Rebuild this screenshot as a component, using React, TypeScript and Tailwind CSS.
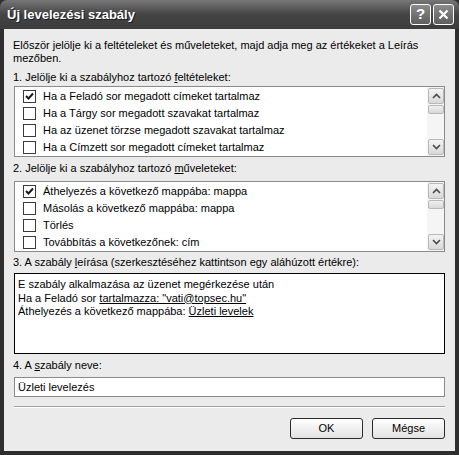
import React from "react";

const font = { fontFamily: '"Liberation Sans", Arial, sans-serif' };

function Check({ on }: { on?: boolean }) {
    return (
        <span className="w-[13px] h-[13px] border border-[#3a3a3a] bg-white flex items-center justify-center shrink-0">
            {on && (
                <svg width="9" height="9" viewBox="0 0 9 9">
                    <path d="M1 4 L3.5 6.5 L8 1.5" stroke="#1a1a1a" strokeWidth="2" fill="none" />
                </svg>
            )}
        </span>
    );
}

function ScrollBtn({ up }: { up?: boolean }) {
    return (
        <div className="h-[16px] w-[16px] rounded-[2px] border border-[#b8b8b8] bg-gradient-to-b from-[#f4f4f4] to-[#d8d8d8] flex items-center justify-center">
            <svg width="9" height="6" viewBox="0 0 9 6">
                <path
                    d={up ? "M1 5 L4.5 1.5 L8 5" : "M1 1 L4.5 4.5 L8 1"}
                    stroke="#4a4a4a"
                    strokeWidth="1.6"
                    fill="none"
                />
            </svg>
        </div>
    );
}

function ScrollBar() {
    return (
        <div className="w-[17px] bg-[#f5f5f5] flex flex-col justify-between py-[1px] pl-[1px]">
            <div className="flex flex-col gap-[1px]">
                <ScrollBtn up />
                <div className="h-[9px] w-[16px] rounded-[2px] border border-[#b8b8b8] bg-gradient-to-b from-[#f0f0f0] to-[#d8d8d8]" />
            </div>
            <ScrollBtn />
        </div>
    );
}

function CheckList({ items }: { items: { label: string; on?: boolean }[] }) {
    return (
        <div className="h-[71px] border border-[#8a8a8a] bg-white flex">
            <div className="flex-1 flex flex-col pt-[1px]">
                {items.map((it, i) => (
                    <div key={i} className="h-[17px] flex items-center gap-[7px] pl-[8px]">
                        <Check on={it.on} />
                        <span>{it.label}</span>
                    </div>
                ))}
            </div>
            <ScrollBar />
        </div>
    );
}

export default function App() {
    const conditions = [
        { label: "Ha a Feladó sor megadott címeket tartalmaz", on: true },
        { label: "Ha a Tárgy sor megadott szavakat tartalmaz" },
        { label: "Ha az üzenet törzse megadott szavakat tartalmaz" },
        { label: "Ha a Címzett sor megadott címeket tartalmaz" },
    ];
    const actions = [
        { label: "Áthelyezés a következő mappába: mappa", on: true },
        { label: "Másolás a következő mappába: mappa" },
        { label: "Törlés" },
        { label: "Továbbítás a következőnek: cím" },
    ];

    return (
        <div className="w-[459px] h-[455px] flex flex-col bg-[#2e2e2e] text-[11px] text-black" style={font}>
            {/* title bar */}
            <div className="h-[29px] shrink-0 flex items-center justify-between pl-[7px] pr-[5px] rounded-t-[7px] bg-gradient-to-b from-[#777777] via-[#444444] to-[#3c3c3c]">
                <span className="text-white font-bold text-[13px] [text-shadow:1px_1px_0_#1e1e1e]">
                    Új levelezési szabály
                </span>
                <div className="flex gap-[2px]">
                    <div className="w-[21px] h-[21px] rounded-[3px] border border-white bg-gradient-to-b from-[#8a8a8a] to-[#5e5e5e] flex items-center justify-center text-white font-bold text-[15px]">
                        ?
                    </div>
                    <div className="w-[21px] h-[21px] rounded-[3px] border border-white bg-gradient-to-b from-[#8a8a8a] to-[#5e5e5e] flex items-center justify-center">
                        <svg width="11" height="11" viewBox="0 0 11 11">
                            <path d="M1.5 1.5 L9.5 9.5 M9.5 1.5 L1.5 9.5" stroke="white" strokeWidth="2.2" />
                        </svg>
                    </div>
                </div>
            </div>

            {/* body */}
            <div className="flex-1 mx-[4px] mb-[4px] bg-[#ebebeb] px-[9px] pt-[10px] flex flex-col leading-[13px]">
                <p>
                    Először jelölje ki a feltételeket és műveleteket, majd adja meg az értékeket a Leírás
                    mezőben.
                </p>

                <p className="mt-[6px]">
                    1. Jelölje ki a szabályhoz tartozó <u>f</u>eltételeket:
                </p>
                <div className="mt-[2px] mx-[1px]">
                    <CheckList items={conditions} />
                </div>

                <p className="mt-[5px]">
                    2. Jelölje ki a szabályhoz tartozó <u>m</u>űveleteket:
                </p>
                <div className="mt-[6px] mx-[1px]">
                    <CheckList items={actions} />
                </div>

                <p className="mt-[4px]">
                    3. A szabály <u>l</u>eírása (szerkesztéséhez kattintson egy aláhúzott értékre):
                </p>
                <div className="mt-[4px] mx-[1px] h-[81px] border border-black bg-white px-[3px] pt-[4px] leading-[13.5px]">
                    <p>E szabály alkalmazása az üzenet megérkezése után</p>
                    <p>
                        Ha a Feladó sor <u>tartalmazza: "vati@topsec.hu"</u>
                    </p>
                    <p>
                        Áthelyezés a következő mappába: <u>Üzleti levelek</u>
                    </p>
                </div>

                <p className="mt-[5px]">
                    4. A <u>s</u>zabály neve:
                </p>
                <div className="mt-[5px] mx-[1px] h-[20px] border border-[#8a8a8a] bg-white px-[3px] flex items-center">
                    Üzleti levelezés
                </div>

                <div className="mt-[9px] mx-[1px] border-t border-[#a0a0a0] border-b border-b-white" />

                <div className="mt-[10px] flex justify-end gap-[9px] pr-[1px]">
                    <button className="w-[73px] h-[21px] rounded-[3px] border border-[#2a2a2a] bg-gradient-to-b from-white to-[#e2e2e2] text-[11px]">
                        OK
                    </button>
                    <button className="w-[73px] h-[21px] rounded-[3px] border border-[#2a2a2a] bg-gradient-to-b from-white to-[#e2e2e2] text-[11px]">
                        Mégse
                    </button>
                </div>
            </div>
        </div>
    );
}
